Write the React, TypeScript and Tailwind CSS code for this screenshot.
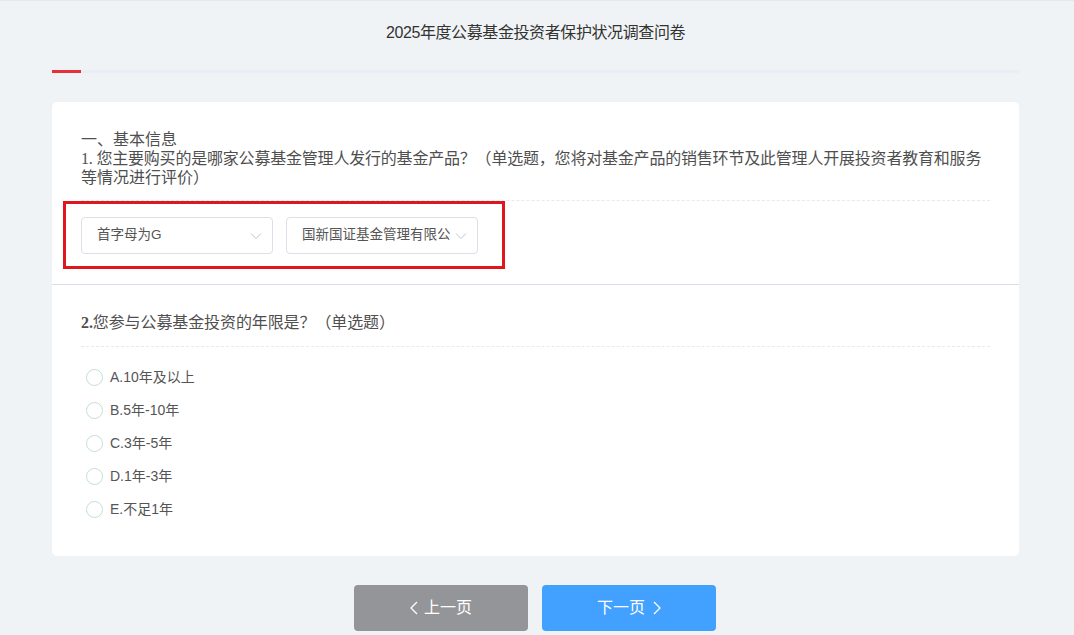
import React from "react";

const serif = { fontFamily: '"Liberation Serif", "Noto Sans CJK SC", serif' };

function Chevron() {
  return (
    <svg width="12" height="8" viewBox="0 0 12 8" fill="none" className="shrink-0">
      <polyline points="1,1.5 6,6.5 11,1.5" stroke="#c0c4cc" strokeWidth="1" />
    </svg>
  );
}

function Select({ text }: { text: string }) {
  return (
    <div className="flex h-[37px] w-[192px] items-center justify-between gap-[5px] rounded-[4px] border border-[#dcdfe6] bg-white pl-[15px] pr-[10px]">
      <span className="overflow-hidden whitespace-nowrap text-[13.5px] text-[#555]">{text}</span>
      <Chevron />
    </div>
  );
}

const options = ["A.10年及以上", "B.5年-10年", "C.3年-5年", "D.1年-3年", "E.不足1年"];

export default function App() {
  return (
    <div
      className="min-h-screen border-t border-[#e6e8ea] bg-[#f0f3f5] pl-[52px] pr-[55px]"
      style={{ fontFamily: '"Liberation Sans", "Noto Sans CJK SC", sans-serif' }}
    >
      <div className="flex h-[63px] items-center justify-center">
        <h1 className="text-[16px] tracking-[-0.4px] text-[#333]">2025年度公募基金投资者保护状况调查问卷</h1>
      </div>
      <div className="mt-[6px] h-[3px] bg-[#e9edf5]">
        <div className="h-full w-[29px] bg-[#e5303a]" />
      </div>
      <div className="mt-[29px] rounded-[5px] bg-white">
        <div className="px-[29px] pb-[30px] pt-[28px]">
          <div className="text-[16px] leading-[19px] text-[#4f4f4f]" style={serif}>
            <div>一、基本信息</div>
            <div className="whitespace-nowrap tracking-[-0.2px]">
              1. 您主要购买的是哪家公募基金管理人发行的基金产品？（单选题，您将对基金产品的销售环节及此管理人开展投资者教育和服务
            </div>
            <div>等情况进行评价）</div>
          </div>
          <div className="mt-[13px] border-t border-dashed border-[#e6eaee]" />
          <div className="relative mt-[16px] flex gap-[13px]">
            <Select text="首字母为G" />
            <Select text="国新国证基金管理有限公" />
            <div className="pointer-events-none absolute left-[-18px] top-[-16px] h-[68px] w-[442px] border-[3px] border-[#e0161e]" />
          </div>
        </div>
        <div className="h-px bg-[#d8dee7]" />
        <div className="px-[29px] pb-[30px] pt-[28px]">
          <div className="text-[16px] leading-[19px] tracking-[-0.1px] text-[#4f4f4f]" style={serif}>
            <span className="font-bold">2.</span>您参与公募基金投资的年限是？（单选题）
          </div>
          <div className="mt-[14px] border-t border-dashed border-[#e6eaee]" />
          <div className="mt-[14px] flex flex-col">
            {options.map((o) => (
              <div key={o} className="flex h-[33px] items-center pl-[5px]">
                <span className="h-[17px] w-[17px] rounded-full border border-[#c2dfd2] bg-white" />
                <span className="ml-[7px] text-[14px] text-[#555]">{o}</span>
              </div>
            ))}
          </div>
        </div>
      </div>
      <div className="mt-[29px] flex justify-center gap-[14px] pr-[1px]">
        <button className="flex h-[46px] w-[174px] items-center justify-center gap-[6px] rounded-[4px] bg-[#939599] text-[16px] text-white">
          <svg width="8" height="14" viewBox="0 0 8 14" fill="none">
            <polyline points="7,1 1,7 7,13" stroke="white" strokeWidth="1.3" />
          </svg>
          上一页
        </button>
        <button className="flex h-[46px] w-[174px] items-center justify-center gap-[8px] rounded-[4px] bg-[#42a0ff] text-[16px] text-white">
          下一页
          <svg width="8" height="14" viewBox="0 0 8 14" fill="none">
            <polyline points="1,1 7,7 1,13" stroke="white" strokeWidth="1.3" />
          </svg>
        </button>
      </div>
    </div>
  );
}
